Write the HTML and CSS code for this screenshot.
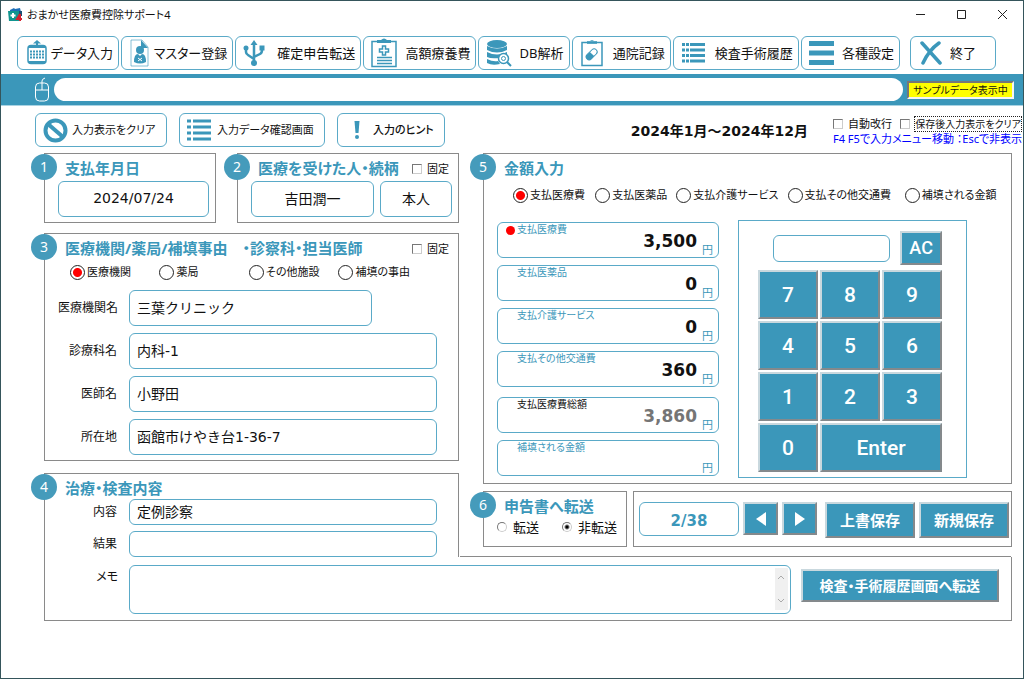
FILE: index.html
```html
<!DOCTYPE html>
<html lang="ja">
<head>
<meta charset="utf-8">
<meta name="viewport" content="width=device-width, initial-scale=1">
<title>おまかせ医療費控除サポート4</title>
<link rel="stylesheet" href="styles.css">
</head>
<body>
<div class="window">
  <header class="titlebar">
    <svg class="app-icon" width="15" height="15" viewBox="0 0 15 15" aria-hidden="true"><path d="M2 3 6 1l1 1 5-1 1 4H2z" fill="#1d6fb8"/><path d="M0 4h11v10H1z" fill="#11958f"/><path d="M11 4h3v5h-3z" fill="#1c4f74"/><path d="M5 6v5M2.500 8.500h5" stroke="#fff" stroke-width="2"/><path d="M12 7v7M12 7 9 12h5" stroke="#d3202f" stroke-width="2" fill="none"/></svg>
    <h1 class="app-name">おまかせ医療費控除サポート4</h1>
    <div class="window-controls">
      <button class="wc" type="button" aria-label="最小化"><svg width="11" height="11" viewBox="0 0 11 11"><path d="M1 5.500h9" /></svg></button>
      <button class="wc" type="button" aria-label="最大化"><svg width="11" height="11" viewBox="0 0 11 11"><path d="M1.500 1.500h8v8h-8z"/></svg></button>
      <button class="wc" type="button" aria-label="閉じる"><svg width="11" height="11" viewBox="0 0 11 11"><path d="m1 1 9 9M10 1l-9 9"/></svg></button>
    </div>
  </header>

  <nav class="toolbar">
    <button class="tool" type="button"><svg width="24" height="28" viewBox="0 0 24 28"><path d="M12 7V3" stroke="currentColor" stroke-width="2"/><path d="M8 4.500 12 1l4 3.500z" fill="currentColor"/><rect x="3" y="6.500" width="18" height="18" rx="3" fill="none" stroke="currentColor" stroke-width="1.500"/><path d="M4 8h16M4 23h16" stroke="currentColor" stroke-width="2"/><path d="M5 12.500h14M5 15.500h14M5 18.500h14" stroke="currentColor" stroke-width="2" stroke-dasharray="2 1"/></svg><span>データ入力</span></button>
    <button class="tool" type="button"><svg width="22" height="28" viewBox="0 0 22 28"><path d="M2 1h11l6 7v19H2z" fill="#fff" stroke="currentColor" stroke-opacity=".6"/><path d="M12 1 19 9h-7z" fill="currentColor"/><circle cx="11" cy="11" r="4" fill="currentColor"/><path d="M5 23q0-8 4-8l2 2 2-2q4 0 4 8-6 3-12 0z" fill="currentColor"/><path d="m9 19 4 3m0-3-4 3" stroke="#fff"/></svg><span>マスター登録</span></button>
    <button class="tool" type="button"><svg width="22" height="28" viewBox="0 0 22 28"><path d="M11 4v20M3 9v4q0 2 2 3l6 4M19 9v2q0 3-2 4l-6 3" fill="none" stroke="currentColor" stroke-width="2.500"/><path d="M7.500 6 11 1l3.500 5z" fill="currentColor"/><circle cx="11" cy="24" r="3" fill="currentColor"/><circle cx="3" cy="9" r="2.500" fill="currentColor"/><path d="M16.500 6.500h5v5h-5z" fill="currentColor"/></svg><span>確定申告転送</span></button>
    <button class="tool" type="button"><svg width="26" height="30" viewBox="0 0 26 30"><path d="M1 3.500h24v25H1z" fill="none" stroke="currentColor" stroke-width="1.500"/><path d="M6 2h4q3-3 6 0h4v3H6z" fill="currentColor"/><path d="M11.500 8h3v3h3v3h-3v3h-3v-3h-3v-3h3z" fill="none" stroke="currentColor" stroke-width="1.500"/><path d="M6 19.500h15M6 22.500h15M6 25.500h15" stroke="currentColor" stroke-width="1.500"/></svg><span>高額療養費</span></button>
    <button class="tool" type="button"><svg width="26" height="28" viewBox="0 0 26 28"><ellipse cx="11" cy="5" rx="10" ry="4" fill="currentColor"/><path d="M1 7q10 5 20 0v4q-10 5-20 0zM1 13q10 5 20 0v2q-6 0-8 4-8 1-12-1zM1 20q6 3 11 2l2 3q-8 2-13-1z" fill="currentColor"/><circle cx="17.500" cy="19.500" r="5" fill="#fff" stroke="currentColor" stroke-width="1.500"/><circle cx="17.500" cy="19.500" r="2" fill="none" stroke="currentColor"/><path d="m21 23 4 4" stroke="currentColor" stroke-width="2"/></svg><span>DB解析</span></button>
    <button class="tool" type="button"><svg width="24" height="28" viewBox="0 0 24 28"><path d="M2 3.500h20v23H2z" fill="none" stroke="currentColor" stroke-width="1.500"/><path d="M7 2h3q2-2 4 0h3v3H7z" fill="currentColor" fill-opacity=".8"/><g transform="rotate(45 12 15)"><rect x="9" y="9" width="6" height="13" rx="3" fill="#fff" stroke="currentColor"/><path d="M9 15h6v4a3 3 0 0 1-6 0z" fill="currentColor"/></g></svg><span>通院記録</span></button>
    <button class="tool" type="button"><svg width="24" height="24" viewBox="0 0 24 24"><path d="M9 3.500h15M9 9h15M9 14.500h15M9 20h15" stroke="currentColor" stroke-width="3"/><path d="M1 3.500h7M1 9h7M1 14.500h7M1 20h7" stroke="currentColor" stroke-width="3" stroke-dasharray="3 1"/></svg><span>検査手術履歴</span></button>
    <button class="tool" type="button"><svg width="25" height="26" viewBox="0 0 25 26"><path d="M0 3.500h25M0 13h25M0 22.500h25" stroke="currentColor" stroke-width="5"/></svg><span>各種設定</span></button>
    <button class="tool tool-exit" type="button"><svg width="22" height="24" viewBox="0 0 22 24"><path d="m2 2 18 20M19 2Q9 9 3 22" fill="none" stroke="currentColor" stroke-width="3.500" stroke-linecap="round"/></svg><span>終了</span></button>
  </nav>

  <div class="guide">
    <svg width="16" height="25" viewBox="0 0 16 25" aria-hidden="true"><path d="M8 6V4q0-2 3-3M1.500 13h13M8 6v7" fill="none" stroke="#fff"/><rect x="1.500" y="6" width="13" height="18" rx="4" fill="none" stroke="#fff"/></svg>
    <input class="guide-text" type="text" aria-label="操作ガイド">
    <span class="sample">サンプルデータ表示中</span>
  </div>

  <div class="quick">
    <button class="quick-btn" type="button"><svg width="25" height="25" viewBox="0 0 25 25"><circle cx="12.500" cy="12.500" r="10" fill="none" stroke="currentColor" stroke-width="4"/><path d="m5 6 15 13" stroke="currentColor" stroke-width="4"/></svg><span>入力表示をクリア</span></button>
    <button class="quick-btn quick-list" type="button"><svg width="24" height="24" viewBox="0 0 24 24"><path d="M6 3h18M6 9h18M6 15h18M6 21h18" stroke="currentColor" stroke-width="3"/><path d="M0 3h4M0 9h4M0 15h4M0 21h4" stroke="currentColor" stroke-width="3"/></svg><span>入力データ確認画面</span></button>
    <button class="quick-btn quick-hint" type="button"><svg width="8" height="20" viewBox="0 0 8 20"><path d="M1.500 1h5l-1 12h-3z" fill="currentColor"/><circle cx="4" cy="17" r="2" fill="currentColor"/></svg><span>入力のヒント</span></button>
    <h2 class="period">2024年1月～2024年12月</h2>
    <div class="options">
      <div class="options-row">
        <label class="check"><input type="checkbox">自動改行</label>
        <label class="check"><input type="checkbox"><span class="focused">保存後入力表示をクリア</span></label>
      </div>
      <p class="keys-hint">F4 F5で入力メニュー移動 ：Escで非表示</p>
    </div>
  </div>

  <main class="main">
    <div class="col">
      <div class="pair">
        <section class="panel">
          <span class="badge">1</span>
          <h3 class="title"><label for="date">支払年月日</label></h3>
          <input class="field center" id="date" type="text" value="2024/07/24">
        </section>
        <section class="panel">
          <span class="badge">2</span>
          <div class="head"><h3 class="title">医療を受けた人・続柄</h3><label class="check"><input type="checkbox">固定</label></div>
          <div class="person"><input class="field center" type="text" value="吉田潤一" aria-label="医療を受けた人"><input class="field center" type="text" value="本人" aria-label="続柄"></div>
        </section>
      </div>

      <section class="panel clinic">
        <span class="badge">3</span>
        <div class="head"><h3 class="title">医療機関/薬局/補填事由&emsp;・診察科・担当医師</h3><label class="check"><input type="checkbox">固定</label></div>
        <div class="kinds">
          <label class="choice"><input type="radio" name="kind" checked>医療機関</label>
          <label class="choice"><input type="radio" name="kind">薬局</label>
          <label class="choice"><input type="radio" name="kind">その他施設</label>
          <label class="choice"><input type="radio" name="kind">補填の事由</label>
        </div>
        <div class="form">
          <label for="clinic">医療機関名</label><input class="field short" id="clinic" type="text" value="三葉クリニック">
          <label for="dept">診療科名</label><input class="field" id="dept" type="text" value="内科-1">
          <label for="doctor">医師名</label><input class="field" id="doctor" type="text" value="小野田">
          <label for="place">所在地</label><input class="field" id="place" type="text" value="函館市けやき台1-36-7">
        </div>
      </section>

      <section class="panel care">
        <span class="badge">4</span>
        <h3 class="title">治療・検査内容</h3>
        <div class="form form-low">
          <label for="content">内容</label><input class="field low" id="content" type="text" value="定例診察">
          <label for="result">結果</label><input class="field low" id="result" type="text">
        </div>
      </section>
    </div>

    <div class="col col-right">
      <section class="panel amount">
        <span class="badge">5</span>
        <h3 class="title">金額入力</h3>
        <div class="types">
          <label class="choice"><input type="radio" name="type" checked>支払医療費</label>
          <label class="choice"><input type="radio" name="type">支払医薬品</label>
          <label class="choice"><input type="radio" name="type">支払介護サービス</label>
          <label class="choice"><input type="radio" name="type">支払その他交通費</label>
          <label class="choice"><input type="radio" name="type">補填される金額</label>
        </div>
        <div class="amount-body">
          <div class="sums">
            <div class="sum active"><label for="a1">支払医療費</label><input id="a1" type="text" value="3,500"><span class="yen">円</span></div>
            <div class="sum"><label for="a2">支払医薬品</label><input id="a2" type="text" value="0"><span class="yen">円</span></div>
            <div class="sum"><label for="a3">支払介護サービス</label><input id="a3" type="text" value="0"><span class="yen">円</span></div>
            <div class="sum"><label for="a4">支払その他交通費</label><input id="a4" type="text" value="360"><span class="yen">円</span></div>
            <div class="sum total"><label for="a5">支払医療費総額</label><input id="a5" type="text" value="3,860" readonly><span class="yen">円</span></div>
            <div class="sum"><label for="a6">補填される金額</label><input id="a6" type="text"><span class="yen">円</span></div>
          </div>
          <div class="keypad">
            <div class="display"><input class="field" type="text" aria-label="電卓表示"><button class="solid ac" type="button">AC</button></div>
            <div class="keys">
              <button class="solid" type="button">7</button><button class="solid" type="button">8</button><button class="solid" type="button">9</button>
              <button class="solid" type="button">4</button><button class="solid" type="button">5</button><button class="solid" type="button">6</button>
              <button class="solid" type="button">1</button><button class="solid" type="button">2</button><button class="solid" type="button">3</button>
              <button class="solid" type="button">0</button><button class="solid enter" type="button">Enter</button>
            </div>
          </div>
        </div>
      </section>

      <div class="bottom-pair">
        <section class="panel transfer">
          <span class="badge">6</span>
          <h3 class="title">申告書へ転送</h3>
          <div class="transfer-choices">
            <label class="dot"><input type="radio" name="transfer">転送</label>
            <label class="dot"><input type="radio" name="transfer" checked>非転送</label>
          </div>
        </section>
        <section class="panel record">
          <input class="field page" type="text" value="2/38" aria-label="レコード番号">
          <button class="solid step" type="button" aria-label="前へ"><svg width="12" height="14" viewBox="0 0 12 14"><path d="M11 0v14L1 7z" fill="#fff"/></svg></button>
          <button class="solid step" type="button" aria-label="次へ"><svg width="12" height="14" viewBox="0 0 12 14"><path d="M1 0v14l10-7z" fill="#fff"/></svg></button>
          <button class="solid save" type="button">上書保存</button>
          <button class="solid save" type="button">新規保存</button>
        </section>
      </div>
    </div>

    <section class="memo">
      <label for="memo">メモ</label>
      <div class="memo-box">
        <textarea class="field" id="memo"></textarea>
        <div class="scroll" aria-hidden="true"><svg width="8" height="6" viewBox="0 0 8 6"><path d="m1 5 3-3 3 3"/></svg><svg width="8" height="6" viewBox="0 0 8 6"><path d="m1 1 3 3 3-3"/></svg></div>
      </div>
      <button class="solid history" type="button">検査・手術履歴画面へ転送</button>
    </section>
  </main>
</div>
</body>
</html>
```
FILE: styles.css
```css
:root {
  --accent: #3b97ba;
  --line: #5aaac8;
  --frame: #8a8a8a;
  --ui: "Noto Sans", "Noto Sans CJK JP", sans-serif;
  --wide: "DejaVu Sans", "Noto Sans CJK JP", sans-serif;
}
* { box-sizing: border-box; }
body {
  margin: 0;
  background: #fff;
  color: #111;
  font: 12px/16px var(--ui);
  font-feature-settings: "palt";
}
h1, h2, h3, p { margin: 0; }
button, input, textarea { font: inherit; font-feature-settings: inherit; color: inherit; margin: 0; }
button { padding: 0; cursor: pointer; white-space: nowrap; }
svg { flex: none; display: block; }

.window { min-height: 100vh; border: 1px solid #35555b; }

.titlebar { display: flex; align-items: center; height: 27px; padding-left: 7px; gap: 4px; }
.app-name { font-size: 11px; font-weight: 400; }
.window-controls { display: flex; margin-left: auto; }
.wc { display: grid; place-items: center; width: 41px; height: 26px; border: 0; background: none; }
.wc svg { fill: none; stroke: #222; }

.toolbar {
  display: grid;
  grid-template-columns: 102fr 112fr 126fr 113fr 91fr 99fr 126fr 99fr 94fr;
  gap: 2px;
  padding: 8px 27px 4px 16px;
}
.tool {
  display: flex;
  align-items: center;
  justify-content: space-between;
  min-width: 0;
  height: 34px;
  padding: 0 5px 0 7px;
  border: 1px solid var(--line);
  border-radius: 6px;
  background: #fff;
  font-size: 13px;
}
.tool svg, .quick-btn svg { color: var(--accent); }
.tool-exit { justify-content: flex-start; gap: 8px; margin-left: 8px; padding-left: 9px; }

.guide { display: flex; align-items: center; gap: 4px; height: 32px; padding: 0 9px 0 33px; background: var(--accent); border-bottom: 1px solid #a9d3e3; }
.guide-text { flex: 1; min-width: 0; height: 23px; padding: 0 12px; border: 0; border-radius: 12px; background: #fff; }
.sample { width: 107px; border: 2px solid; border-color: #777 #f4f4f4 #f4f4f4 #777; background: #ff0; font-size: 10px; line-height: 14px; text-align: center; white-space: nowrap; }

.quick { display: flex; align-items: flex-start; gap: 12px; padding: 7px 0 6px 34px; }
.quick-btn { display: flex; align-items: center; gap: 4px; width: 132px; height: 34px; padding-left: 7px; border: 1px solid var(--line); border-radius: 6px; background: #fff; font-size: 11px; }
.quick-list { width: 146px; gap: 6px; }
.quick-hint { width: 108px; gap: 12px; padding-left: 15px; font-weight: 500; }
.period { margin-left: auto; padding: 8px 12px 0 0; font: bold 14px/20px var(--wide); white-space: nowrap; }
.options { width: 191px; padding: 3px 2px 0 1px; }
.options-row { display: flex; justify-content: space-between; }
.options-row .check { font-size: 10px; }
.options-row .check:first-child { font-size: 11px; }
.check { display: flex; align-items: center; gap: 5px; font-size: 11px; white-space: nowrap; }
.check input { appearance: none; flex: none; width: 10px; height: 10px; border: 1px solid; border-color: #777 #ccc #ccc #777; background: #fff; }
.focused { line-height: 14px; outline: 1px dotted #222; }
.keys-hint { color: #00f; font-size: 11px; line-height: 13px; white-space: nowrap; }

.main { display: grid; grid-template-columns: 415fr 529fr; column-gap: 24px; padding: 0 11px 8px 43px; }
.col { display: flex; flex-direction: column; gap: 10px; min-width: 0; }
.col-right { gap: 7px; }
.panel { position: relative; padding: 5px 6px 5px 13px; border: 1px solid var(--frame); }
.badge { position: absolute; top: 0; left: -14px; width: 26px; height: 26px; border-radius: 50%; background: #459bbb; color: #fff; font-size: 14px; line-height: 26px; text-align: center; }
.title { padding: 0 0 2px 7px; color: var(--accent); font-size: 15px; line-height: 18px; font-weight: 700; white-space: nowrap; }
.head { display: flex; align-items: center; justify-content: space-between; padding-right: 3px; }
.pair { display: grid; grid-template-columns: 172fr 222fr; gap: 21px; }
.field { display: block; width: 100%; min-width: 0; height: 36px; padding: 0 7px 2px; border: 1px solid var(--line); border-radius: 6px; background: #fff; font: 14px/20px var(--wide); }
.center { text-align: center; }
.pair .field { margin-top: 2px; }
.person { display: grid; grid-template-columns: 123fr 72fr; gap: 6px; }

.choice { display: flex; align-items: center; gap: 2px; min-width: 0; font-size: 11px; white-space: nowrap; }
.choice input { appearance: none; flex: none; width: 15px; height: 15px; border: 1px solid #222; border-radius: 50%; background: #fff; }
.choice input:checked { background: radial-gradient(circle, #f00 4px, #fff 5px); }
.kinds { display: grid; grid-template-columns: repeat(4, 89fr) 24fr; height: 26px; padding-left: 12px; margin-bottom: 5px; }
.form { display: grid; grid-template-columns: 59px 1fr; gap: 7px 12px; align-items: center; padding-right: 15px; text-align: right; white-space: nowrap; }
.short { width: 79%; }
.form-low { row-gap: 6px; }
.low { height: 26px; }
.care { margin-top: 2px; padding-bottom: 0; border-bottom: 0; }

.amount { padding-bottom: 5px; }
.types { display: grid; grid-template-columns: 82fr 81fr 111fr 117fr 100fr; height: 32px; padding-left: 16px; margin-bottom: 9px; }
.amount-body { display: grid; grid-template-columns: 222fr 229fr; column-gap: 19px; padding-right: 38px; }
.sums { display: grid; align-content: space-between; padding: 2px 0; }
.sum { display: grid; grid-template-columns: 1fr 14px; grid-template-rows: 14px 20px; position: relative; padding-right: 2px; border: 1px solid var(--line); border-radius: 6px; }
.sum label { grid-column: 1 / 3; padding-left: 19px; color: var(--accent); font-size: 10px; line-height: 12px; }
.sum input { width: 100%; min-width: 0; height: 20px; margin-top: -6px; padding: 0 5px 0 0; border: 0; background: none; font: bold 17px/20px var(--wide); text-align: right; }
.yen { align-self: end; color: var(--accent); font-size: 11px; line-height: 14px; }
.active::before { content: ""; position: absolute; left: 8px; top: 3px; width: 9px; height: 9px; border-radius: 50%; background: #f00; }
.total { margin-top: 3px; }
.total label { color: #111; }
.total input { color: #757575; }

.keypad { padding: 10px 24px 5px 19px; border: 1px solid var(--line); }
.display { display: grid; grid-template-columns: 118fr 42fr; gap: 10px; align-items: center; padding-left: 15px; margin-bottom: 5px; }
.display .field { height: 27px; }
.solid { border: 2px solid; border-color: #c9d8de #84898c #84898c #c9d8de; background: var(--accent); color: #fff; font-size: 15px; font-weight: 700; }
.keys { display: grid; grid-template-columns: repeat(3, 1fr); gap: 2px; }
.keys .solid { height: 49px; font: 500 21px/24px Roboto, sans-serif; }
.solid.ac { height: 34px; font: 500 18px/20px Roboto, sans-serif; }
.enter { grid-column: span 2; }

.bottom-pair { display: grid; grid-template-columns: 144fr 379fr; gap: 6px; }
.transfer-choices { display: flex; justify-content: space-between; padding-right: 3px; font-size: 13px; line-height: 20px; }
.transfer { padding-bottom: 9px; }
.dot { display: flex; align-items: center; gap: 6px; white-space: nowrap; }
.dot input { appearance: none; width: 10px; height: 10px; border: 1px solid; border-color: #777 #ccc #ccc #777; border-radius: 50%; }
.dot input:checked { background: radial-gradient(circle, #000 1px, #fff 3px); }
.record { display: flex; align-items: flex-start; gap: 4px; padding: 10px 2px 8px 5px; }
.page { flex: 1; height: 34px; padding: 3px 0 0; color: var(--accent); font-size: 15px; font-weight: 700; text-align: center; }
.step { display: grid; place-items: center; width: 35px; height: 33px; }
.save { width: 90px; height: 36px; }
.step + .save { margin-left: 4px; }

.memo { grid-column: 1 / 3; position: relative; display: grid; grid-template-columns: 73px 661fr 198fr; column-gap: 10px; align-items: start; padding: 8px 12px 6px 0; border: 1px solid var(--frame); border-top: 0; }
.memo::before { content: ""; position: absolute; top: -1px; right: 0; width: calc((100% - 22px) * 0.5842); height: 1px; background: var(--frame); }
.memo label { padding-top: 4px; text-align: right; }
.memo-box { position: relative; padding-left: 1px; }
.memo-box .field { height: 49px; resize: none; overflow: hidden; }
.scroll { position: absolute; top: 3px; right: 3px; bottom: 4px; width: 13px; display: flex; flex-direction: column; align-items: center; justify-content: space-between; padding: 6px 0; background: #f0f0f0; }
.scroll svg { fill: none; stroke: #aaa; }
.history { height: 33px; margin-top: 4px; font-size: 14px; }
```
